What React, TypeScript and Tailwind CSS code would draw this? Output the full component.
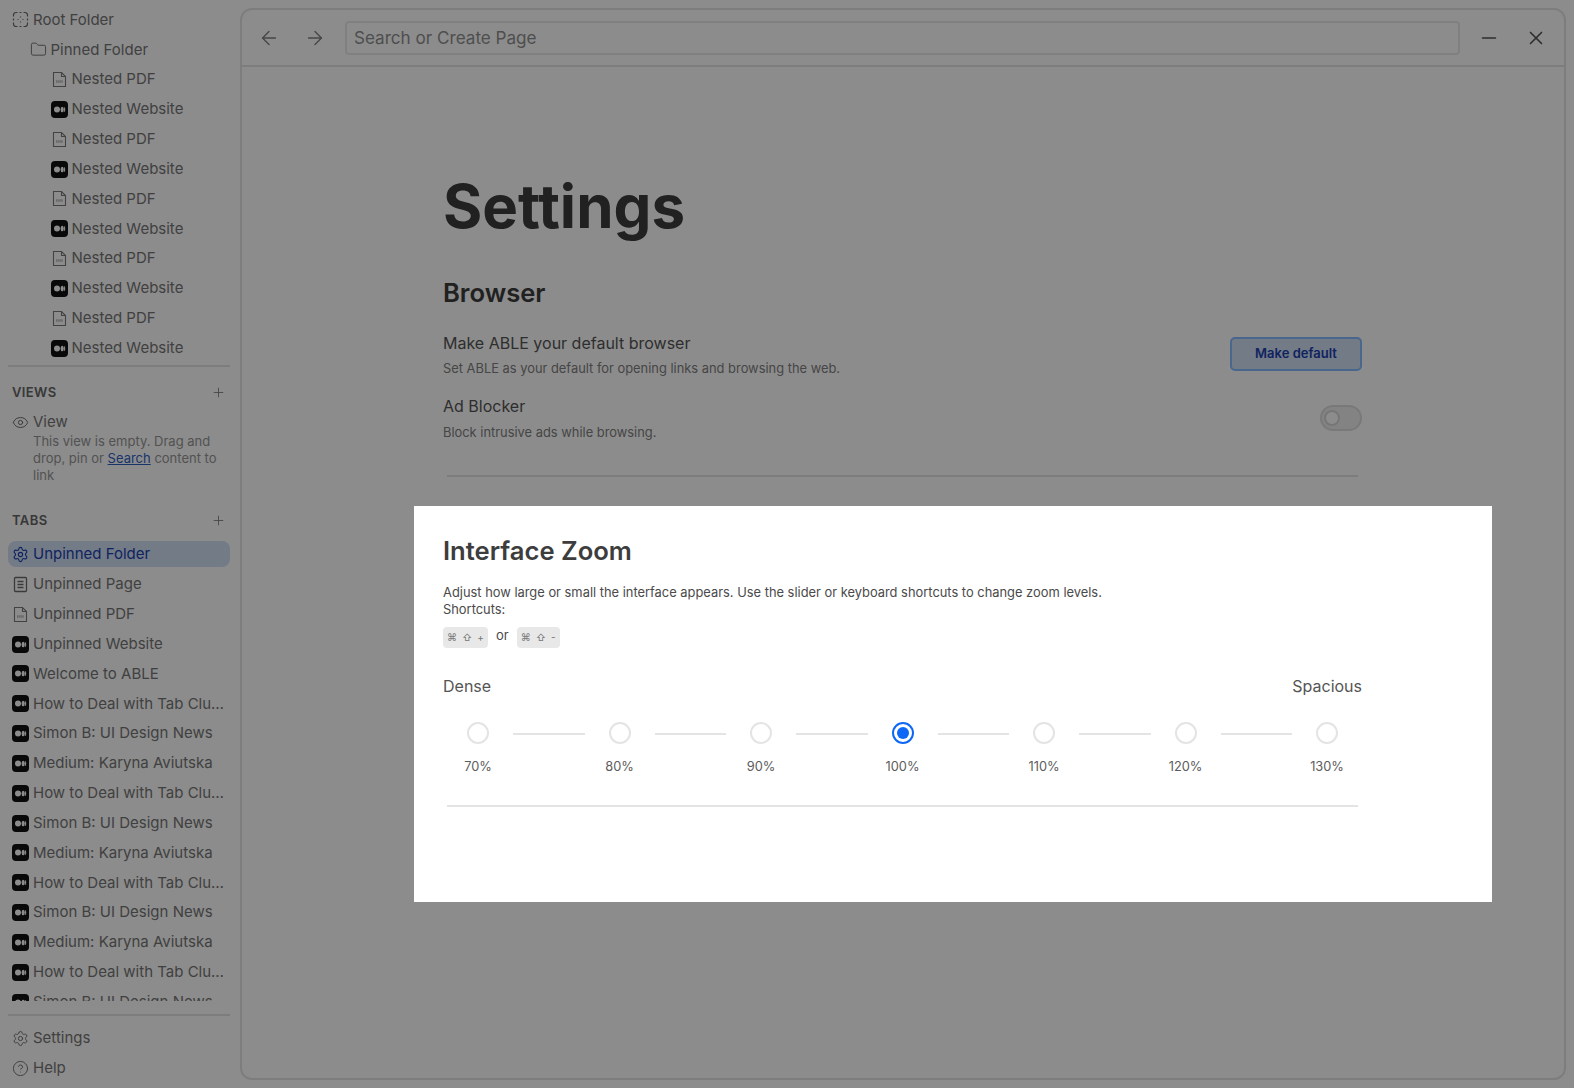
import { ArrowLeft, ArrowRight, CircleHelp, Eye, Folder, Minus, Plus, Settings, X } from "lucide-react"

const MediumIcon = () => (
    <svg width="17" height="17" viewBox="0 0 17 17" className="shrink-0">
        <rect width="17" height="17" rx="4" fill="#111111" />
        <ellipse cx="6" cy="8.5" rx="3" ry="3" fill="#ffffff" />
        <ellipse cx="11.2" cy="8.5" rx="1.6" ry="2.8" fill="#ffffff" />
        <ellipse cx="13.6" cy="8.5" rx="0.6" ry="2.5" fill="#ffffff" />
    </svg>
)

const PdfIcon = () => (
    <svg width="17" height="17" viewBox="0 0 17 17" fill="none" stroke="#7a7a7a" strokeWidth="1.1" className="shrink-0">
        <path d="M2.5 1.5h8l4 4v10h-12z" />
        <path d="M10.5 1.5v4h4" />
        <path d="M5 10.5h7" strokeWidth="2.4" strokeDasharray="1.6 0.5" opacity="0.5" />
    </svg>
)

const RootIcon = () => (
    <svg width="17" height="17" viewBox="0 0 17 17" fill="none" stroke="#6b6b6b" strokeWidth="1.2" className="shrink-0">
        <path d="M5.5 1.5H4A2.5 2.5 0 0 0 1.5 4v1.5M11.5 1.5H13A2.5 2.5 0 0 1 15.5 4v1.5M5.5 15.5H4A2.5 2.5 0 0 1 1.5 13v-1.5M11.5 15.5H13a2.5 2.5 0 0 0 2.5-2.5v-1.5M7.5 1.5h2M7.5 15.5h2M1.5 7.5v2M15.5 7.5v2" />
        <path d="M8.5 5.5v1M8.5 10.5v1M5.5 8.5h1M10.5 8.5h1" />
    </svg>
)

const PageIcon = () => (
    <svg width="17" height="17" viewBox="0 0 17 17" fill="none" stroke="#6b6b6b" strokeWidth="1.3" className="shrink-0">
        <rect x="2.5" y="1.5" width="12" height="14" rx="1" />
        <path d="M5.5 5.5h6M5.5 8.5h6M5.5 11.5h6" />
    </svg>
)

const Row = ({ icon, label, indent = "pl-[4px]" }: { icon: React.ReactNode; label: string; indent?: string }) => (
    <div className={`flex h-[29.85px] shrink-0 items-center gap-1 pr-[5px] ${indent}`}>
        {icon}
        <span className="truncate text-[15px] text-[#767676]">{label}</span>
    </div>
)

const nested = ["Nested PDF", "Nested Website", "Nested PDF", "Nested Website", "Nested PDF", "Nested Website", "Nested PDF", "Nested Website", "Nested PDF", "Nested Website"]

const tabs = [
    "Unpinned Website",
    "Welcome to ABLE",
    "How to Deal with Tab Clutter",
    "Simon B: UI Design News",
    "Medium: Karyna Aviutska",
    "How to Deal with Tab Clutter",
    "Simon B: UI Design News",
    "Medium: Karyna Aviutska",
    "How to Deal with Tab Clutter",
    "Simon B: UI Design News",
    "Medium: Karyna Aviutska",
    "How to Deal with Tab Clutter",
    "Simon B: UI Design News",
]

const zooms = ["70%", "80%", "90%", "100%", "110%", "120%", "130%"]

const Sidebar = () => (
    <aside className="flex h-full w-[240px] shrink-0 flex-col pt-[5px] pr-[10px] pl-2">
        <Row icon={<RootIcon />} label="Root Folder" />
        <Row icon={<Folder size={17} strokeWidth={1.3} color="#6b6b6b" />} label="Pinned Folder" indent="pl-[21.5px]" />
        {nested.map((name, i) => (
            <Row key={i} icon={name === "Nested PDF" ? <PdfIcon /> : <MediumIcon />} label={name} indent="pl-[42.5px]" />
        ))}
        <div className="mt-[1.5px] h-[2px] shrink-0 bg-[#e4e4e4]" />

        <div className="mt-[16px] flex h-[20px] shrink-0 items-center justify-between pr-1 pl-1">
            <span className="text-[13px] font-semibold tracking-[0.03em] text-[#666666]">VIEWS</span>
            <Plus size={15} strokeWidth={1.3} color="#777777" />
        </div>
        <div className="mt-[5px]">
            <Row icon={<Eye size={17} strokeWidth={1.4} color="#6b6b6b" />} label="View" />
        </div>
        <p className="-mt-[4px] pr-2 pl-[25px] text-[13px] leading-[17px] text-[#959595]">
            This view is empty. Drag and drop, pin or <span className="text-[#2f5fc4] underline">Search</span> content to link
        </p>

        <div className="mt-[26px] flex h-[20px] shrink-0 items-center justify-between pr-1 pl-1">
            <span className="text-[13px] font-semibold tracking-[0.03em] text-[#666666]">TABS</span>
            <Plus size={15} strokeWidth={1.3} color="#777777" />
        </div>

        <div className="mt-[9px] flex min-h-0 flex-1 flex-col overflow-hidden">
            <div className="mt-[2px] mb-[2px] flex h-[26px] shrink-0 items-center gap-1 rounded-lg bg-[#cfe0f5] pl-[4px]">
                <Settings size={17} strokeWidth={1.6} color="#1e3fae" />
                <span className="text-[15px] text-[#1e3fae]">Unpinned Folder</span>
            </div>
            <Row icon={<PageIcon />} label="Unpinned Page" />
            <Row icon={<PdfIcon />} label="Unpinned PDF" />
            {tabs.map((name, i) => (
                <Row key={i} icon={<MediumIcon />} label={name} />
            ))}
        </div>

        <div className="mt-[13px] h-[2px] shrink-0 bg-[#e4e4e4]" />
        <div className="flex flex-col pt-[7px] pb-[5px]">
            <Row icon={<Settings size={17} strokeWidth={1.3} color="#6b6b6b" />} label="Settings" />
            <Row icon={<CircleHelp size={17} strokeWidth={1.3} color="#6b6b6b" />} label="Help" />
        </div>
    </aside>
)

const Keys = ({ sign }: { sign: string }) => (
    <span className="flex h-[21px] items-center gap-[5px] rounded bg-[#e8e8e8] px-[4px] text-[10px] text-[#777777]">
        <span>⌘</span>
        <span>⇧</span>
        <span>{sign}</span>
    </span>
)

const ZoomSlider = () => (
    <div className="mt-[24px] flex items-start">
        {zooms.map((z, i) => (
            <div key={z} className={`flex items-start ${i < zooms.length - 1 ? "flex-1" : ""}`}>
                <div className="flex w-[70px] shrink-0 flex-col items-center gap-[15px]">
                    {z === "100%" ? (
                        <span className="flex h-[22px] w-[22px] items-center justify-center rounded-full border-2 border-[#0f67f5]">
                            <span className="h-[12px] w-[12px] rounded-full bg-[#0f67f5]" />
                        </span>
                    ) : (
                        <span className="h-[22px] w-[22px] rounded-full border-2 border-[#e4e4e4]" />
                    )}
                    <span className="text-[12.8px] leading-4 text-[#5c5c5c]">{z}</span>
                </div>
                {i < zooms.length - 1 && <div className="mt-[11px] h-[2px] flex-1 bg-[#e4e4e4]" />}
            </div>
        ))}
    </div>
)

export default function App() {
    return (
        <div className="relative flex h-[1088px] w-[1574px] overflow-hidden bg-white font-['Inter',sans-serif]">
            <Sidebar />

            <main className="mt-2 mr-2 mb-2 flex min-w-0 flex-1 flex-col rounded-xl border-2 border-[#e4e4e4]">
                <header className="flex h-[57px] shrink-0 items-center border-b-2 border-[#e4e4e4] pr-[17px] pl-[16px]">
                    <ArrowLeft size={22} strokeWidth={1.5} color="#808080" />
                    <ArrowRight size={22} strokeWidth={1.5} color="#808080" className="ml-6" />
                    <div className="ml-[19px] flex h-[34px] flex-1 items-center rounded border-2 border-[#e9e9e9] px-[7px] text-[17.1px] text-[#8f8f8f]">
                        Search or Create Page
                    </div>
                    <Minus size={22} strokeWidth={1.8} color="#555555" className="ml-[18px]" />
                    <X size={22} strokeWidth={1.8} color="#555555" className="ml-[25px]" />
                </header>

                <div className="ml-[201px] flex w-[919px] flex-col">
                    <h1 className="mt-[99px] text-[60px] leading-[80px] font-bold text-[#3d3d3d]">Settings</h1>

                    <h2 className="mt-[29px] text-[25.6px] leading-[36px] font-semibold text-[#3d3d3d]">Browser</h2>

                    <div className="mt-[20px] flex items-center justify-between">
                        <div>
                            <p className="text-[16px] leading-[24px] text-[#555555]">Make ABLE your default browser</p>
                            <p className="mt-[4px] text-[12.88px] leading-[20px] text-[#808080]">Set ABLE as your default for opening links and browsing the web.</p>
                        </div>
                        <button className="-mt-[2px] h-[34px] w-[132px] rounded-[5px] border-2 border-[#85bcff] bg-[#cfe0f5] text-[13px] font-semibold text-[#1e3fae]">
                            Make default
                        </button>
                    </div>

                    <div className="mt-[15px] flex items-center justify-between">
                        <div>
                            <p className="text-[16px] leading-[24px] text-[#555555]">Ad Blocker</p>
                            <p className="mt-[5px] text-[12.88px] leading-[20px] text-[#808080]">Block intrusive ads while browsing.</p>
                        </div>
                        <div className="-mt-[1px] flex h-[26px] w-[42px] items-center rounded-full border-2 border-[#dddddd] bg-[#eeeeee] pl-[2px]">
                            <span className="h-[16px] w-[16px] rounded-full border-2 border-[#d8d8d8] bg-white" />
                        </div>
                    </div>

                    <div className="mx-1 mt-[32px] h-[2px] bg-[#e4e4e4]" />

                    <section className="relative z-20 mt-[29px] -mr-[130px] -ml-[29px] flex h-[396px] flex-col bg-white pt-[27px] pr-[130px] pl-[29px]">
                        <h2 className="text-[25.6px] leading-[36px] font-semibold text-[#3d3d3d]">Interface Zoom</h2>
                        <p className="mt-[15px] text-[12.88px] leading-[17px] text-[#4a4a4a]">
                            Adjust how large or small the interface appears. Use the slider or keyboard shortcuts to change zoom levels.
                            <br />
                            Shortcuts:
                        </p>
                        <div className="mt-[9px] flex items-center gap-[8px] text-[13px] text-[#4a4a4a]">
                            <Keys sign="+" />
                            <span className="-mt-[3px]">or</span>
                            <Keys sign="-" />
                        </div>
                        <div className="mt-[26px] flex justify-between text-[16px] leading-[24px] text-[#555555]">
                            <span>Dense</span>
                            <span>Spacious</span>
                        </div>
                        <ZoomSlider />
                        <div className="mx-1 mt-[30px] h-[2px] bg-[#e4e4e4]" />
                    </section>
                </div>
            </main>

            <div className="absolute inset-0 z-10 bg-black/45" />
        </div>
    )
}
